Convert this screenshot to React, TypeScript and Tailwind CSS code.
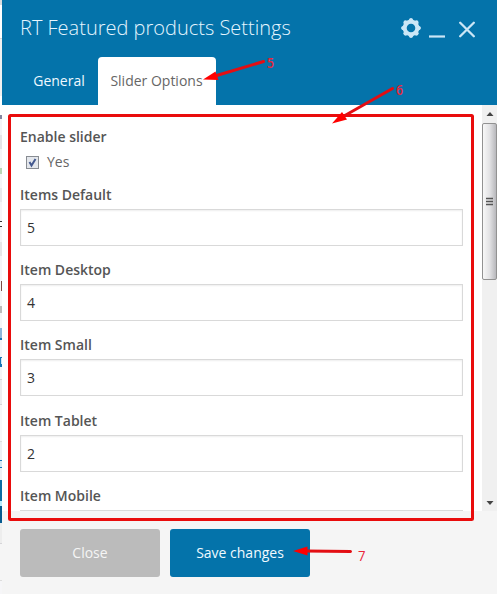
const fields = [
  { label: 'Items Default', value: '5', row: 'h-[75px]' },
  { label: 'Item Desktop', value: '4', row: 'h-[75px]' },
  { label: 'Item Small', value: '3', row: 'h-[76px]' },
  { label: 'Item Tablet', value: '2', row: 'h-[75px]' },
];

function Gear() {
  const teeth = [0, 45, 90, 135, 180, 225, 270, 315];
  return (
    <svg width="20" height="20" viewBox="0 0 20 20" className="relative -top-px block">
      <g fill="#cbe6f6">
        {teeth.map((a) => (
          <path key={a} d="M7 3.4 L8.4 .8 Q10 -.7 11.6 .8 L13 3.4Z" transform={`rotate(${a} 10 10)`} />
        ))}
      </g>
      <circle cx="10" cy="10" r="6.3" fill="none" stroke="#cbe6f6" strokeWidth="4" />
    </svg>
  );
}

function PageEdge() {
  return (
    <div className="flex h-[594px] w-[2px] shrink-0 flex-col overflow-hidden bg-[#f6f6f8]">
      <div className="h-[5px] shrink-0 bg-[#d9dde0]" />
      <div className="h-[34px] shrink-0 border-b border-[#d8d8d8] bg-white" />
      <div className="h-[57px] shrink-0 bg-[#f1f1f1]" />
      <div className="h-[19px] shrink-0 bg-white" />
      <div className="h-[4px] shrink-0 bg-[#8585a0]" />
      <div className="h-[16px] shrink-0 bg-[#f4f4f8]" />
      <div className="h-[14px] shrink-0 bg-[#e4e4e8]" />
      <div className="h-[19px] shrink-0 bg-[#f5f5f8]" />
      <div className="h-[6px] shrink-0 bg-[#b9d6b5]" />
      <div className="h-[14px] shrink-0 bg-[#f5f5f8]" />
      <div className="h-[14px] shrink-0 bg-[#e9e9ed]" />
      <div className="h-[19px] shrink-0 bg-[#f5f5f8]" />
      <div className="h-[1px] shrink-0 bg-[#333]" />
      <div className="h-[4px] shrink-0 bg-white" />
      <div className="h-[1px] shrink-0 bg-[#333]" />
      <div className="h-[15px] shrink-0 bg-[#f5f5f8]" />
      <div className="h-[14px] shrink-0 bg-[#e6e6e8]" />
      <div className="h-[25px] shrink-0 bg-[#f5f5f8]" />
      <div className="ml-[1px] h-[10px] shrink-0 bg-[#7c4b44]" />
      <div className="h-[15px] shrink-0 bg-[#f5f5f8]" />
      <div className="h-[7px] shrink-0 bg-[#bbb]" />
      <div className="h-[15px] shrink-0 bg-[#f5f5f8]" />
      <div className="h-[10px] shrink-0 bg-[#8db8dc]" />
      <div className="h-[2px] shrink-0 bg-[#1675b7]" />
      <div className="h-[17px] shrink-0 bg-[#f5f5f8]" />
      <div className="h-[8px] shrink-0 border-y border-l border-[#1675b7] bg-[#d5e8f4]" />
      <div className="h-[2px] shrink-0 bg-[#1675b7]" />
      <div className="h-[12px] shrink-0 bg-[#f5f5f8]" />
      <div className="h-[26px] shrink-0 border-y border-[#d5d5d8] bg-[#ededf0]" />
      <div className="h-[36px] shrink-0 bg-[#f7f7f9]" />
      <div className="h-[19px] shrink-0 border-t border-[#ddd] bg-[#eef0f4]" />
      <div className="h-[8px] shrink-0 border-y border-[#1675b7] bg-[#d5e8f4]" />
      <div className="h-[12px] shrink-0 bg-[#eef0f4]" />
      <div className="h-[21px] shrink-0 bg-[#0b6da3]" />
      <div className="h-[5px] shrink-0 bg-[#b8edff]" />
      <div className="h-[17px] shrink-0 bg-[#065b90]" />
      <div className="h-[21px] shrink-0 border-b border-[#d5d5d8] bg-[#ededed]" />
      <div className="h-[37px] shrink-0 border-b border-[#ddd] bg-[#f5f5f5]" />
    </div>
  );
}

function Header() {
  return (
    <header className="flex h-[105px] shrink-0 flex-col bg-[#0473aa]">
      <div className="flex h-[57px] items-center pl-[18px] pr-[22px]">
        <h1 className="grow whitespace-nowrap pb-[2px] text-[20px] font-light leading-[27px] text-[#e6f6ff]">RT Featured products Settings</h1>
        <Gear />
        <svg width="16" height="20" className="ml-[8px]"><path d="M0 17.5H16" stroke="#cbe6f6" strokeWidth="2.2" /></svg>
        <svg width="16" height="20" className="ml-[14px]"><path d="M1.2 3.8L14.8 17.2M14.8 3.8L1.2 17.2" stroke="#cbe6f6" strokeWidth="2.3" strokeLinecap="round" /></svg>
      </div>
      <nav className="flex h-[48px] pl-[16px] text-[14px]">
        <div className="flex w-[80px] items-center justify-center pb-[2px] pl-[2px] text-[#eff9ff]">General</div>
        <div className="flex w-[118px] items-center justify-center rounded-t-[4px] bg-white pb-[2px] pr-[1px] text-[#666]">Slider Options</div>
      </nav>
    </header>
  );
}

function Scrollbar() {
  return (
    <div className="flex h-[406px] w-[15px] shrink-0 flex-col items-center bg-[#f0f0f0]">
      <svg width="15" height="18"><path d="M4.5 11L8 7L11.5 11Z" fill="#444" /></svg>
      <div className="flex h-[157px] w-[15px] items-center justify-center rounded-[2px] border border-[#929292] bg-linear-to-r from-[#f8f8f8] via-[#e3e3e5] to-[#b8b8bc]">
        <svg width="7" height="9"><path d="M0 1.5H7M0 4.5H7M0 7.5H7" stroke="#555" strokeWidth="1.5" /></svg>
      </div>
      <div className="grow" />
      <svg width="15" height="18"><path d="M4.5 8L8 12L11.5 8Z" fill="#444" /></svg>
    </div>
  );
}

function Annotations() {
  return (
    <svg className="pointer-events-none absolute left-0 top-0" width="497" height="594" fontFamily="'Open Sans', sans-serif" fontSize="14">
      <rect x="9.5" y="115.5" width="463" height="404" rx="1" fill="none" stroke="#e90c0c" strokeWidth="3" />
      <g stroke="#e30e13" strokeWidth="3" strokeLinecap="round">
        <path d="M215 76L263.5 61.5" />
        <path d="M344 116L392.5 88.5" />
        <path d="M306 551L350.5 551.5" />
      </g>
      <g fill="#ff0000">
        <path d="M203 79.5L215.5 71.5L218.5 80Z" />
        <path d="M332 123.5L342 112L347 119.5Z" />
        <path d="M293 551L307.5 546.5V555.5Z" />
      </g>
      <g fill="#ea2539">
        <text x="267" y="68" textLength="7" lengthAdjust="spacingAndGlyphs" fontWeight="600">5</text>
        <text x="396" y="95" textLength="7" lengthAdjust="spacingAndGlyphs" fontWeight="600">6</text>
        <text x="358" y="561" textLength="7.5" lengthAdjust="spacingAndGlyphs">7</text>
      </g>
    </svg>
  );
}

export default function App() {
  return (
    <div className="relative flex h-[594px] w-[497px] overflow-hidden bg-white font-['Open_Sans',sans-serif] text-[14px]">
      <PageEdge />
      <main className="flex w-[495px] flex-col">
        <Header />
        <div className="flex h-[406px] shrink-0">
          <section className="h-[406px] grow overflow-hidden pl-[18px] pr-[19px] pt-[22px] text-[#555]">
            <div className="h-[58px]">
              <div className="font-semibold leading-[20px]">Enable slider</div>
              <div className="flex items-center gap-[8px] pl-[6px] pt-[5px] leading-[20px] text-[#666]">
                <svg width="13" height="13"><rect x=".5" y=".5" width="12" height="12" fill="#e4e7ec" stroke="#888c92" /><path d="M3.5 6L5.5 9.5L9.5 3" fill="none" stroke="#44598f" strokeWidth="2" /></svg>
                <span>Yes</span>
              </div>
            </div>
            {fields.map((f) => (
              <div key={f.label} className={f.row}>
                <div className="h-[24px] font-semibold leading-[20px]">{f.label}</div>
                <div className="flex h-[37px] items-center border border-[#d9d9d9] pl-[6px] text-[#333] shadow-[inset_0_1px_2px_#00000012]">{f.value}</div>
              </div>
            ))}
            <div className="h-[24px] font-semibold leading-[20px]">Item Mobile</div>
            <div className="h-[1px] bg-[#d9d9d9]" />
          </section>
          <Scrollbar />
        </div>
        <footer className="flex h-[83px] gap-[10px] bg-[#f5f5f5] pl-[18px] pt-[18px]">
          <button className="h-[48px] w-[140px] rounded-[3px] bg-[#bbb] pb-[2px] text-[#f5f5f5]">Close</button>
          <button className="h-[48px] w-[140px] rounded-[3px] bg-[#0473aa] pb-[2px] text-[#f0faff]">Save changes</button>
        </footer>
      </main>
      <Annotations />
    </div>
  );
}
